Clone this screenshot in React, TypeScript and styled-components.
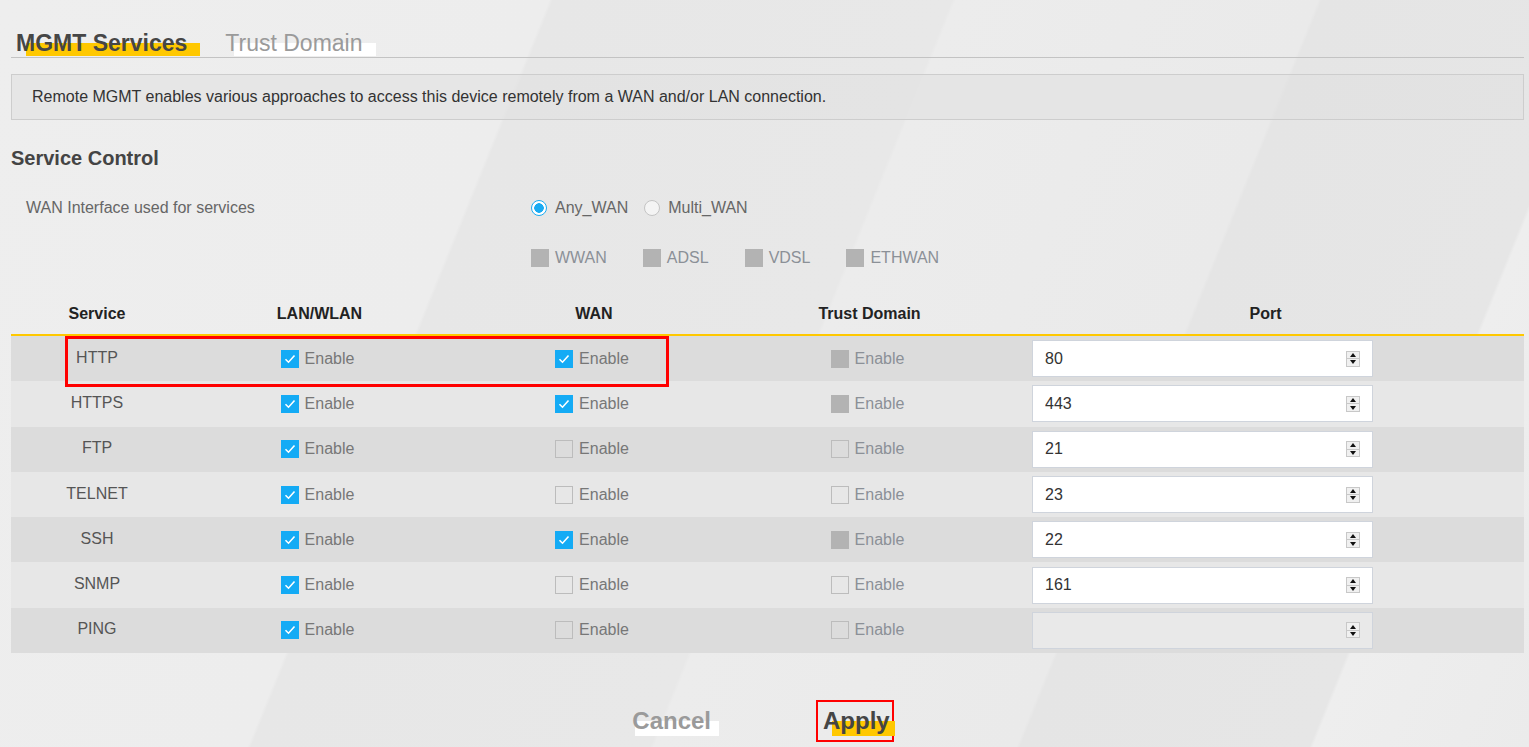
import React from 'react'
import styled, { createGlobalStyle } from 'styled-components'

const GlobalStyle = createGlobalStyle`
  html, body {
    margin: 0;
    padding: 0;
  }
  body {
    font-family: 'Liberation Sans', Arial, sans-serif;
    background: linear-gradient(
      112deg,
      #eeeeee 0%,
      #ededed 30%,
      #e7e7e7 30.2%,
      #e8e8e8 52%,
      #ececec 52.2%,
      #eaeaea 72%,
      #e5e5e5 72.2%,
      #e6e6e6 88%,
      #eeeeee 88.2%,
      #ebebeb 100%
    );
    min-height: 747px;
    overflow: hidden;
  }
`

const Page = styled.div`
  padding: 30px 5px 0 11px;
  width: 1513px;
`

const TabBar = styled.div`
  display: flex;
  gap: 38px;
  padding-left: 5px;
  height: 27px;
  border-bottom: 1px solid #c3c3c3;
`

const Tab = styled.span<{ $active?: boolean }>`
  position: relative;
  z-index: 0;
  font-size: 23px;
  line-height: 27px;
  font-weight: ${(p) => (p.$active ? 'bold' : 'normal')};
  color: ${(p) => (p.$active ? '#464646' : '#9a9a9a')};

  &::after {
    content: '';
    position: absolute;
    z-index: -1;
    left: ${(p) => (p.$active ? 10 : 9)}px;
    right: ${(p) => (p.$active ? -13 : -14)}px;
    top: 13px;
    bottom: 1px;
    background: ${(p) => (p.$active ? '#ffc800' : '#ffffff')};
  }
`

const InfoBox = styled.div`
  margin-top: 16px;
  height: 44px;
  border: 1px solid #cdcdcd;
  background: rgba(224, 224, 224, 0.55);
  display: flex;
  align-items: center;
  padding-left: 20px;
  font-size: 16px;
  color: #333;
`

const SectionTitle = styled.h2`
  margin: 26px 0 13px;
  font-size: 20px;
  line-height: 24px;
  font-weight: bold;
  color: #444;
`

const FormRow = styled.div`
  display: grid;
  grid-template-columns: 505px 1fr;
  align-items: center;
  height: 50px;
  padding-left: 15px;
  font-size: 16px;
`

const FormLabel = styled.span`
  color: #666;
`

const Options = styled.div<{ $gap: number }>`
  display: flex;
  align-items: center;
  gap: ${(p) => p.$gap}px;
`

const Option = styled.label<{ $muted?: boolean }>`
  display: flex;
  align-items: center;
  gap: 6px;
  color: ${(p) => (p.$muted ? '#8b9097' : '#666')};
`

const Radio = styled.span<{ $on?: boolean }>`
  box-sizing: border-box;
  width: 16px;
  height: 16px;
  border-radius: 50%;
  border: 1px solid ${(p) => (p.$on ? '#1aabf2' : '#c4c4c4')};
  background: ${(p) =>
    p.$on ? 'radial-gradient(circle, #1aabf2 0 4.5px, #fff 5px)' : '#f4f4f4'};
  margin-right: 2px;
`

type BoxState = 'on' | 'off' | 'disabled'

const Box = styled.span<{ $state: BoxState }>`
  box-sizing: border-box;
  width: 18px;
  height: 18px;
  flex-shrink: 0;
  display: flex;
  align-items: center;
  justify-content: center;
  background: ${(p) =>
    p.$state === 'on' ? '#14abf5' : p.$state === 'disabled' ? '#b3b3b3' : 'transparent'};
  border: ${(p) => (p.$state === 'off' ? '1px solid #bcbcbc' : 'none')};
`

const Check = ({ state }: { state: BoxState }) => (
  <Box $state={state}>
    {state === 'on' && (
      <svg width="12" height="10" viewBox="0 0 12 10">
        <path d="M1.5 5.2 L4.5 8.2 L10.5 1.5" fill="none" stroke="#fff" strokeWidth="1.6" />
      </svg>
    )}
  </Box>
)

const Table = styled.div`
  position: relative;
  margin-top: 11px;
`

const Grid = styled.div`
  display: grid;
  grid-template-columns: 172px 273px 276px 275px 1fr;
  align-items: center;
`

const HeadRow = styled(Grid)`
  height: 40px;
  border-bottom: 2px solid #ffc800;
  font-size: 16px;
  font-weight: bold;
  color: #222;
  text-align: center;
`

const Row = styled(Grid)<{ $odd: boolean }>`
  height: 45.3px;
  background: ${(p) => (p.$odd ? '#dcdcdc' : '#e7e7e7')};
  font-size: 16px;
`

const ServiceName = styled.span`
  text-align: center;
  color: #555;
  margin-top: -2px;
`

const EnableCell = styled.label<{ $muted?: boolean }>`
  display: flex;
  justify-content: center;
  align-items: center;
  gap: 6px;
  padding-right: 4px;
  color: ${(p) => (p.$muted ? '#8b9097' : '#777')};
`

const PortCell = styled.div`
  padding-left: 25px;
`

const PortField = styled.div<{ $disabled?: boolean }>`
  box-sizing: border-box;
  width: 341px;
  height: 37px;
  display: flex;
  align-items: center;
  border: 1px solid #cfd4dc;
  background: ${(p) => (p.$disabled ? '#e9e9e9' : '#fff')};
  padding: 0 12px 0 12px;
`

const PortInput = styled.input`
  flex: 1;
  border: none;
  outline: none;
  background: transparent;
  font-family: inherit;
  font-size: 16px;
  color: #333;
  padding: 0;
`

const Spinner = styled.span`
  display: flex;
  flex-direction: column;
  width: 14px;
  height: 16px;
  border: 1px solid #c8c8c8;
  box-sizing: border-box;
  background: #f0f0f0;
`

const SpinHalf = styled.span`
  flex: 1;
  display: flex;
  align-items: center;
  justify-content: center;
  & + & {
    border-top: 1px solid #c8c8c8;
  }
`

const Highlight = styled.div`
  position: absolute;
  left: 54px;
  top: 42px;
  width: 604px;
  height: 51px;
  box-sizing: border-box;
  border: 3px solid #ff0000;
  pointer-events: none;
`

const Actions = styled.div`
  display: flex;
  justify-content: center;
  align-items: center;
  gap: 101px;
  margin-top: 47px;
  padding-right: 16px;
`

const ActionButton = styled.button<{ $primary?: boolean }>`
  position: relative;
  z-index: 0;
  background: none;
  font-family: inherit;
  font-size: 24px;
  font-weight: bold;
  line-height: 28px;
  color: ${(p) => (p.$primary ? '#454545' : '#9a9a9a')};
  border: ${(p) => (p.$primary ? '2px solid #ff0000' : '2px solid transparent')};
  padding: 5px 2px 5px 5px;
  cursor: pointer;

  &::after {
    content: '';
    position: absolute;
    z-index: -1;
    left: ${(p) => (p.$primary ? 14 : 8)}px;
    right: ${(p) => (p.$primary ? -3 : -6)}px;
    top: 19px;
    bottom: 4px;
    background: ${(p) => (p.$primary ? '#ffc800' : '#ffffff')};
  }
`

type Service = {
  name: string
  lan: BoxState
  wan: BoxState
  trust: BoxState
  port: string
  portDisabled?: boolean
}

const services: Service[] = [
  { name: 'HTTP', lan: 'on', wan: 'on', trust: 'disabled', port: '80' },
  { name: 'HTTPS', lan: 'on', wan: 'on', trust: 'disabled', port: '443' },
  { name: 'FTP', lan: 'on', wan: 'off', trust: 'off', port: '21' },
  { name: 'TELNET', lan: 'on', wan: 'off', trust: 'off', port: '23' },
  { name: 'SSH', lan: 'on', wan: 'on', trust: 'disabled', port: '22' },
  { name: 'SNMP', lan: 'on', wan: 'off', trust: 'off', port: '161' },
  { name: 'PING', lan: 'on', wan: 'off', trust: 'off', port: '', portDisabled: true },
]

const SpinArrows = () => (
  <Spinner>
    <SpinHalf>
      <svg width="6" height="4" viewBox="0 0 6 4">
        <path d="M0 4 L3 0 L6 4 Z" fill="#111" />
      </svg>
    </SpinHalf>
    <SpinHalf>
      <svg width="6" height="4" viewBox="0 0 6 4">
        <path d="M0 0 L6 0 L3 4 Z" fill="#111" />
      </svg>
    </SpinHalf>
  </Spinner>
)

export default function App() {
  return (
    <>
      <GlobalStyle />
      <Page>
        <TabBar>
          <Tab $active>MGMT Services</Tab>
          <Tab>Trust Domain</Tab>
        </TabBar>

        <InfoBox>
          Remote MGMT enables various approaches to access this device remotely from a WAN and/or
          LAN connection.
        </InfoBox>

        <SectionTitle>Service Control</SectionTitle>

        <FormRow>
          <FormLabel>WAN Interface used for services</FormLabel>
          <Options $gap={16}>
            <Option>
              <Radio $on />
              Any_WAN
            </Option>
            <Option>
              <Radio />
              Multi_WAN
            </Option>
          </Options>
        </FormRow>
        <FormRow>
          <span />
          <Options $gap={36}>
            {['WWAN', 'ADSL', 'VDSL', 'ETHWAN'].map((w) => (
              <Option key={w} $muted>
                <Check state="disabled" />
                {w}
              </Option>
            ))}
          </Options>
        </FormRow>

        <Table>
          <HeadRow>
            <span>Service</span>
            <span>LAN/WLAN</span>
            <span>WAN</span>
            <span>Trust Domain</span>
            <span>Port</span>
          </HeadRow>
          {services.map((s, i) => (
            <Row key={s.name} $odd={i % 2 === 0}>
              <ServiceName>{s.name}</ServiceName>
              <EnableCell>
                <Check state={s.lan} />
                Enable
              </EnableCell>
              <EnableCell>
                <Check state={s.wan} />
                Enable
              </EnableCell>
              <EnableCell $muted>
                <Check state={s.trust} />
                Enable
              </EnableCell>
              <PortCell>
                <PortField $disabled={s.portDisabled}>
                  <PortInput defaultValue={s.port} disabled={s.portDisabled} />
                  <SpinArrows />
                </PortField>
              </PortCell>
            </Row>
          ))}
          <Highlight />
        </Table>

        <Actions>
          <ActionButton>Cancel</ActionButton>
          <ActionButton $primary>Apply</ActionButton>
        </Actions>
      </Page>
    </>
  )
}
